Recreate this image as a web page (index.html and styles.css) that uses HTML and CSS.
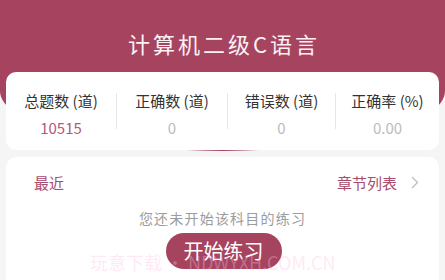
FILE: index.html
```html
<!DOCTYPE html>
<html lang="zh-CN">
<head>
<meta charset="utf-8">
<title>计算机二级C语言</title>
<link rel="stylesheet" href="styles.css">
</head>
<body>
<div class="page">
  <header class="hero">
    <h1 class="title">计算机二级C语言</h1>
  </header>

  <section class="card stats">
    <div class="stat">
      <div class="stat-label">总题数 (道)</div>
      <div class="stat-value accent">10515</div>
    </div>
    <i class="sep"></i>
    <div class="stat">
      <div class="stat-label">正确数 (道)</div>
      <div class="stat-value">0</div>
    </div>
    <i class="sep"></i>
    <div class="stat">
      <div class="stat-label">错误数 (道)</div>
      <div class="stat-value">0</div>
    </div>
    <i class="sep"></i>
    <div class="stat">
      <div class="stat-label">正确率 (%)</div>
      <div class="stat-value">0.00</div>
    </div>
  </section>

  <section class="card recent">
    <div class="recent-head">
      <span class="recent-title">最近</span>
      <a class="chapter-link">章节列表
        <svg class="chevron" width="8" height="13" viewBox="0 0 8 13"><polyline points="1,1 6.5,6.5 1,12" fill="none" stroke="#bdbdbd" stroke-width="1.3"/></svg>
      </a>
    </div>
    <p class="empty-hint">您还未开始该科目的练习</p>
    <button class="start-btn">开始练习</button>
  </section>

  <div class="watermark">玩意下载 • NDWYXH.COM.CN</div>
</div>
</body>
</html>
```

FILE: styles.css
```css
* { box-sizing: border-box; }

html, body {
  margin: 0;
  padding: 0;
}

body {
  background: #f5f5f5;
  font-family: "Noto Sans CJK SC", "Noto Sans", sans-serif;
  color: #333;
}

.page {
  position: relative;
  width: 445px;
  height: 280px;
  overflow: hidden;
}

.hero {
  height: 151px;
  background: #a6445f;
  border-radius: 0 0 50% 50% / 0 0 60px 60px;
  padding-top: 28px;
}

.title {
  margin: 0 0 0 3px;
  text-align: center;
  color: #fbf1f4;
  font-size: 22px;
  line-height: 30px;
  font-weight: normal;
  letter-spacing: 3px;
}

.card {
  background: #fff;
  border-radius: 10px;
  margin: 0 6px;
}

.stats {
  margin-top: -79px;
  height: 78px;
  padding: 19px 0 0 0;
  display: grid;
  grid-template-columns: 110px 1px 110px 1px 107px 1px 1fr;
  align-items: start;
  position: relative;
}

.stat {
  text-align: center;
}

.stat-label {
  font-size: 15px;
  line-height: 20px;
  color: #333;
}

.stat-value {
  margin-top: 7px;
  font-size: 15px;
  line-height: 20px;
  color: #bcbcbc;
}

.stat-value.accent {
  color: #b5587b;
}

.sep {
  display: block;
  width: 1px;
  height: 36px;
  margin-top: 2px;
  background: #e6e6e6;
}

.recent {
  margin-top: 7px;
  padding: 12px 20px 40px 28px;
  display: flex;
  flex-direction: column;
  align-items: center;
}

.recent-head {
  align-self: stretch;
  display: flex;
  justify-content: space-between;
  align-items: center;
  height: 26px;
}

.recent-title {
  font-size: 15px;
  color: #a84c6c;
}

.chapter-link {
  font-size: 15px;
  color: #a84c6c;
  display: flex;
  align-items: center;
  gap: 14px;
}

.chevron {
  display: block;
}

.empty-hint {
  margin: 13px 0 0 -8px;
  font-size: 14px;
  line-height: 20px;
  letter-spacing: 1.2px;
  color: #9c9c9c;
}

.start-btn {
  margin: 5px 0 0 -6px;
  height: 36px;
  padding: 0 18px;
  border: none;
  border-radius: 18px;
  background: #a6445f;
  color: #fff;
  font-family: inherit;
  font-size: 20px;
  line-height: 36px;
}

.watermark {
  position: absolute;
  left: 90px;
  top: 249px;
  font-size: 18px;
  line-height: 26px;
  color: rgba(255, 190, 225, 0.35);
  white-space: nowrap;
  pointer-events: none;
}
```
